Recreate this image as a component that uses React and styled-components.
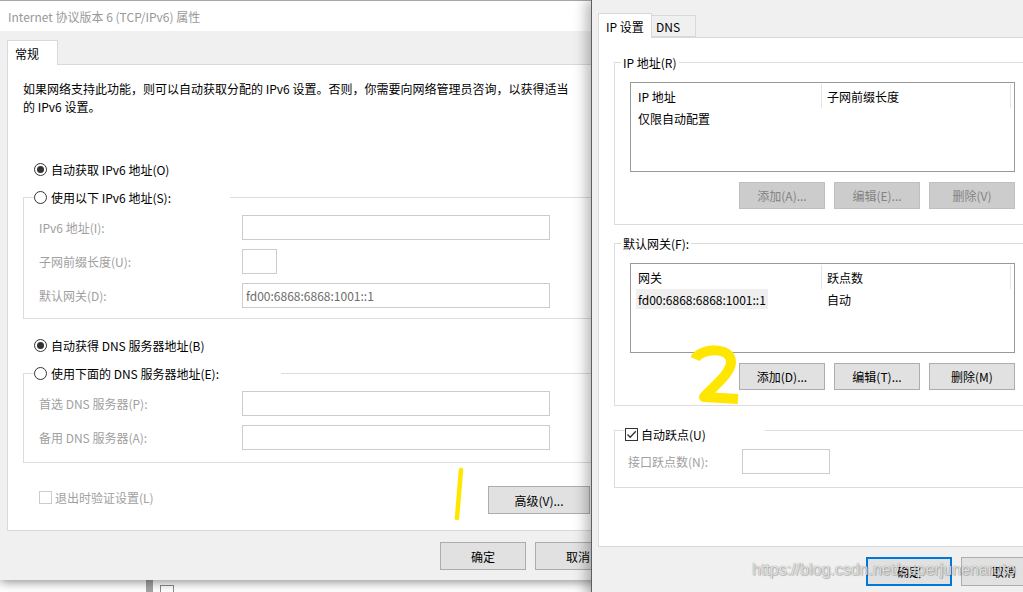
import React from 'react'
import styled, { createGlobalStyle } from 'styled-components'

const GlobalStyle = createGlobalStyle`
  html, body {
    margin: 0;
    padding: 0;
    background: #fff;
  }
  body {
    font-family: 'Noto Sans CJK SC', 'Microsoft YaHei', sans-serif;
    font-size: 12px;
    color: #000;
  }
  * {
    box-sizing: border-box;
  }
`

const Desktop = styled.div`
  position: relative;
  width: 1023px;
  height: 592px;
  overflow: hidden;
  background: #fff;
`

const BackWindow = styled.div`
  position: absolute;
  left: 0;
  top: 578px;
  width: 591px;
  height: 14px;
  display: flex;
  background: #fff;
`

const BackBar = styled.div`
  width: 7px;
  margin-left: 146px;
  background: #a3a3a3;
`

const BackCheck = styled.div`
  width: 14px;
  height: 14px;
  margin: 7px 0 0 7px;
  border: 1px solid #8a8a8a;
  background: #fff;
`

const LeftWindow = styled.div`
  position: absolute;
  left: 0;
  top: 0;
  width: 630px;
  height: 580px;
  display: flex;
  flex-direction: column;
  background: #f0f0f0;
  border-top: 1px solid #a6a6a6;
  box-shadow: 0 2px 10px rgba(0, 0, 0, 0.45);
`

const TitleBar = styled.div`
  height: 30px;
  display: flex;
  align-items: center;
  padding-left: 8px;
  background: #fff;
  color: #999;
  white-space: nowrap;
`

const Body = styled.div`
  flex: 1;
  display: flex;
  flex-direction: column;
  padding: 9px 7px 0;
`

const TabStrip = styled.div`
  display: flex;
  align-items: flex-end;
`

const Tab = styled.div`
  position: relative;
  z-index: 1;
  width: ${p => p.$w}px;
  height: ${p => (p.$active ? 25 : 22)}px;
  margin-bottom: ${p => (p.$active ? -1 : 0)}px;
  display: flex;
  align-items: center;
  padding-left: ${p => p.$pad}px;
  border: 1px solid #d9d9d9;
  border-bottom: ${p => (p.$active ? 'none' : '1px solid #d9d9d9')};
  border-left: ${p => (p.$joined ? 'none' : '1px solid #d9d9d9')};
  background: ${p => (p.$active ? '#fff' : '#f0f0f0')};
  white-space: nowrap;
`

const Panel = styled.div`
  width: ${p => p.$w}px;
  height: ${p => p.$h}px;
  display: flex;
  flex-direction: column;
  align-items: flex-start;
  padding: ${p => p.$pt}px 0 0 15px;
  border: 1px solid #d9d9d9;
  background: #fff;
`

const Description = styled.div`
  line-height: 18px;
  white-space: nowrap;
`

const RadioRow = styled.div`
  display: flex;
  align-items: center;
  gap: 4px;
  height: 20px;
  margin-top: ${p => p.$mt}px;
  padding-left: 11px;
  white-space: nowrap;
`

const Radio = styled.span`
  position: relative;
  width: 13px;
  height: 13px;
  flex: none;
  border: 1px solid #333;
  border-radius: 50%;
  background: #fff;

  &::after {
    content: '';
    display: ${p => (p.$checked ? 'block' : 'none')};
    position: absolute;
    left: 2px;
    top: 2px;
    width: 7px;
    height: 7px;
    border-radius: 50%;
    background: #333;
  }
`

const GroupBox = styled.div`
  display: flex;
  flex-direction: column;
  align-items: flex-start;
  width: ${p => p.$w}px;
  margin-top: ${p => p.$mt}px;
  padding-bottom: ${p => p.$pb}px;
  border: 1px solid #dcdcdc;
`

const Legend = styled.div`
  width: ${p => (p.$w ? `${p.$w}px` : 'fit-content')};
  height: ${p => p.$h || 18}px;
  display: flex;
  align-items: center;
  gap: ${p => p.$gap || 0}px;
  margin-top: ${p => p.$mt}px;
  margin-left: ${p => p.$ml}px;
  padding: 0 ${p => p.$px || 0}px;
  background: #fff;
  white-space: nowrap;
`

const FieldGrid = styled.div`
  display: grid;
  grid-template-columns: ${p => p.$label}px auto;
  row-gap: 9px;
  align-items: center;
  margin-top: ${p => p.$mt}px;
  margin-left: ${p => p.$ml}px;
`

const FieldLabel = styled.span`
  color: #a0a0a0;
  white-space: nowrap;
`

const TextInput = styled.div`
  width: ${p => p.$w}px;
  height: 25px;
  display: flex;
  align-items: center;
  padding-left: 3px;
  border: 1px solid #cccccc;
  background: #fff;
  color: #6d6d6d;
`

const BottomRow = styled.div`
  width: 567px;
  display: flex;
  align-items: flex-start;
  justify-content: space-between;
  margin-top: 23px;
`

const CheckLabel = styled.label`
  display: flex;
  align-items: center;
  gap: 3px;
  height: ${p => p.$h || 18}px;
  margin-top: ${p => p.$mt || 0}px;
  margin-left: ${p => p.$ml || 0}px;
  color: ${p => (p.$disabled ? '#a0a0a0' : '#000')};
  white-space: nowrap;
`

const CheckBox = styled.span`
  width: 13px;
  height: 13px;
  flex: none;
  display: flex;
  align-items: center;
  justify-content: center;
  border: 1px solid ${p => (p.$disabled ? '#cccccc' : '#333')};
  background: #fff;
`

const Button = styled.button`
  width: ${p => p.$w || 86}px;
  height: ${p => p.$h || 28}px;
  padding: 0;
  font: inherit;
  border: ${p => (p.$primary ? '2px solid #0078d7' : `1px solid ${p.disabled ? '#bfbfbf' : '#adadad'}`)};
  background: ${p => (p.disabled ? '#cccccc' : '#e1e1e1')};
  color: ${p => (p.disabled ? '#838383' : '#000')};
  white-space: nowrap;
`

const ButtonBar = styled.div`
  display: flex;
  justify-content: flex-end;
  gap: 9px;
  width: ${p => p.$w}px;
  margin-top: ${p => p.$mt}px;
  padding-right: ${p => p.$pr}px;
`

const AdvWindow = styled.div`
  position: absolute;
  left: 591px;
  top: 0;
  width: 470px;
  height: 600px;
  display: flex;
  flex-direction: column;
  padding: 13px 0 0 6px;
  background: #f0f0f0;
  border-left: 1px solid #5f5f5f;
  box-shadow: -5px 0 12px rgba(0, 0, 0, 0.28);
`

const ListView = styled.div`
  width: 385px;
  height: 90px;
  margin-top: 11px;
  margin-left: 15px;
  border: 1px solid #999;
  background: #fff;
`

const ListHeader = styled.div`
  display: grid;
  grid-template-columns: 191px 189px;
  height: 24px;
  margin-top: 1px;
`

const HeaderCell = styled.div`
  display: flex;
  align-items: center;
  padding-left: ${p => p.$pl}px;
  border-right: 1px solid #e5e5e5;
  white-space: nowrap;
`

const ListRow = styled.div`
  display: grid;
  grid-template-columns: 191px 189px;
  height: 20px;
`

const Cell = styled.div`
  display: flex;
  align-items: center;
  padding-left: ${p => p.$pl}px;
  white-space: nowrap;
`

const Selection = styled.span`
  display: inline-flex;
  align-items: center;
  height: 20px;
  padding: 0 2px;
  background: ${p => (p.$on ? '#efefef' : 'transparent')};
`

const ListButtons = styled.div`
  width: 385px;
  display: flex;
  justify-content: flex-end;
  gap: 9px;
  margin-top: 10px;
  margin-left: 15px;
`

const Watermark = styled.div`
  position: absolute;
  left: 752px;
  top: 561px;
  font-family: 'Liberation Sans', Arial, sans-serif;
  font-size: 16px;
  color: rgba(255, 255, 255, 0.8);
  text-shadow: 0 0 1px rgba(0, 0, 0, 0.55), 1px 1px 1px rgba(0, 0, 0, 0.2);
  white-space: nowrap;
  pointer-events: none;
`

const Mark = styled.svg`
  position: absolute;
  left: ${p => p.$x}px;
  top: ${p => p.$y}px;
  overflow: visible;
  pointer-events: none;
`

const CheckMark = () => (
  <svg width="11" height="11" viewBox="0 0 11 11">
    <polyline points="1.5,5.5 4.2,8.3 9.8,2.2" fill="none" stroke="#333" strokeWidth="1.3" />
  </svg>
)

const GatewayGroup = ({ title, header, rows, buttons, disabled, mt }) => (
  <GroupBox $w={424} $mt={mt} $pb={15}>
    <Legend $mt={-10} $ml={6} $px={2}>{title}</Legend>
    <ListView>
      <ListHeader>
        <HeaderCell $pl={7}>{header[0]}</HeaderCell>
        <HeaderCell $pl={5}>{header[1]}</HeaderCell>
      </ListHeader>
      {rows.map(([a, b, on]) => (
        <ListRow key={a}>
          <Cell $pl={5}><Selection $on={on}>{a}</Selection></Cell>
          <Cell $pl={5}>{b}</Cell>
        </ListRow>
      ))}
    </ListView>
    <ListButtons>
      {buttons.map(b => (
        <Button key={b} $h={27} disabled={disabled}>{b}</Button>
      ))}
    </ListButtons>
  </GroupBox>
)

export default function App() {
  return (
    <Desktop>
      <GlobalStyle />
      <BackWindow>
        <BackBar />
        <BackCheck />
      </BackWindow>

      <LeftWindow>
        <TitleBar>Internet 协议版本 6 (TCP/IPv6) 属性</TitleBar>
        <Body>
          <TabStrip>
            <Tab $active $w={51} $pad={7}>常规</Tab>
          </TabStrip>
          <Panel $w={616} $h={467} $pt={15}>
            <Description>
              如果网络支持此功能，则可以自动获取分配的 IPv6 设置。否则，你需要向网络管理员咨询，以获得适当
              <br />
              的 IPv6 设置。
            </Description>

            <RadioRow $mt={43}><Radio $checked />自动获取 IPv6 地址(O)</RadioRow>
            <GroupBox $w={577} $mt={18} $pb={10}>
              <Legend $w={196} $h={20} $mt={-11} $ml={10} $gap={4}>
                <Radio />使用以下 IPv6 地址(S):
              </Legend>
              <FieldGrid $label={203} $mt={8} $ml={15}>
                <FieldLabel>IPv6 地址(I):</FieldLabel>
                <TextInput $w={308} />
                <FieldLabel>子网前缀长度(U):</FieldLabel>
                <TextInput $w={35} />
                <FieldLabel>默认网关(D):</FieldLabel>
                <TextInput $w={308}>fd00:6868:6868:1001::1</TextInput>
              </FieldGrid>
            </GroupBox>

            <RadioRow $mt={16}><Radio $checked />自动获得 DNS 服务器地址(B)</RadioRow>
            <GroupBox $w={577} $mt={18} $pb={12}>
              <Legend $w={247} $h={20} $mt={-11} $ml={10} $gap={4}>
                <Radio />使用下面的 DNS 服务器地址(E):
              </Legend>
              <FieldGrid $label={203} $mt={8} $ml={15}>
                <FieldLabel>首选 DNS 服务器(P):</FieldLabel>
                <TextInput $w={308} />
                <FieldLabel>备用 DNS 服务器(A):</FieldLabel>
                <TextInput $w={308} />
              </FieldGrid>
            </GroupBox>

            <BottomRow>
              <CheckLabel $disabled $ml={16} $mt={2}>
                <CheckBox $disabled />退出时验证设置(L)
              </CheckLabel>
              <Button $w={102}>高级(V)...</Button>
            </BottomRow>
          </Panel>
          <ButtonBar $mt={11} $pr={2}>
            <Button>确定</Button>
            <Button>取消</Button>
          </ButtonBar>
        </Body>
      </LeftWindow>

      <AdvWindow>
        <TabStrip>
          <Tab $active $w={54} $pad={7}>IP 设置</Tab>
          <Tab $joined $w={44} $pad={4}>DNS</Tab>
        </TabStrip>
        <Panel $w={456} $h={510} $pt={0}>
          <GatewayGroup
            mt={24}
            title="IP 地址(R)"
            header={['IP 地址', '子网前缀长度']}
            rows={[['仅限自动配置', '', false]]}
            buttons={['添加(A)...', '编辑(E)...', '删除(V)']}
            disabled
          />
          <GatewayGroup
            mt={18}
            title="默认网关(F):"
            header={['网关', '跃点数']}
            rows={[['fd00:6868:6868:1001::1', '自动', true]]}
            buttons={['添加(D)...', '编辑(T)...', '删除(M)']}
          />
          <GroupBox $w={424} $mt={24} $pb={13}>
            <Legend $w={140} $mt={-6} $ml={10}>
              <CheckLabel>
                <CheckBox><CheckMark /></CheckBox>自动跃点(U)
              </CheckLabel>
            </Legend>
            <FieldGrid $label={114} $mt={6} $ml={13}>
              <FieldLabel>接口跃点数(N):</FieldLabel>
              <TextInput $w={88} />
            </FieldGrid>
          </GroupBox>
        </Panel>
        <ButtonBar $w={456} $mt={10} $pr={7}>
          <Button $primary $h={29}>确定</Button>
          <Button $h={29}>取消</Button>
        </ButtonBar>
      </AdvWindow>

      <Mark $x={450} $y={466} width="16" height="58" viewBox="0 0 16 58">
        <path d="M11 4 L7 52" fill="none" stroke="#ffe600" strokeWidth="4.5" strokeLinecap="round" />
      </Mark>
      <Mark $x={688} $y={342} width="56" height="66" viewBox="0 0 56 66">
        <path
          d="M7 17 C12 6, 43 4, 43 20 C43 31, 27 43, 16 55 L50 57"
          fill="none"
          stroke="#ffe600"
          strokeWidth="10"
          strokeLinejoin="round"
        />
      </Mark>
      <Watermark>https://blog.csdn.net/superjunenaruto</Watermark>
    </Desktop>
  )
}
